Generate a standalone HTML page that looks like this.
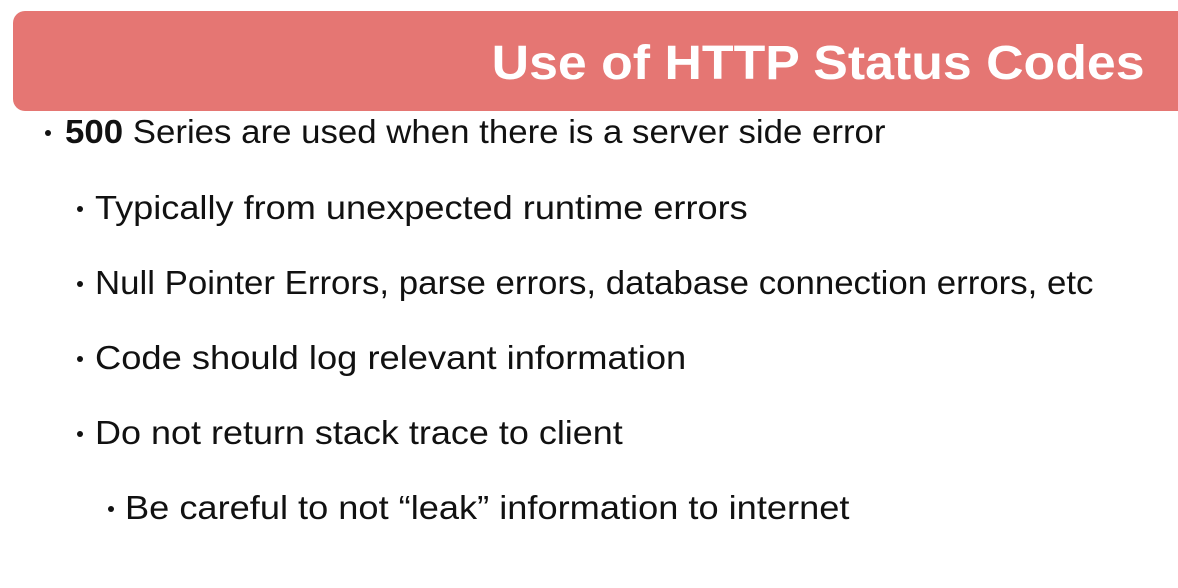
<!DOCTYPE html>
<html><head><style>
body{margin:0;width:1178px;height:588px;background:#fff;overflow:hidden;position:relative;font-family:"Liberation Sans",sans-serif;}
.bar{position:absolute;left:13px;top:11px;width:1190px;height:100px;background:#e57673;border-radius:12px;}
.title{position:absolute;right:33px;top:36px;color:#fff;font-weight:bold;font-size:48px;line-height:56px;white-space:nowrap;transform-origin:right center;transform:scaleX(1.08);}
.l{position:absolute;font-size:33px;line-height:36px;color:#111;white-space:nowrap;transform-origin:left center;transform:scaleX(1.055);}
.b{position:absolute;width:6px;height:6px;border-radius:50%;background:#111;}
</style></head><body>
<div class="bar"></div>
<div class="title">Use of HTTP Status Codes</div>
<div class="b" style="left:45px;top:130px"></div>
<div class="l" style="left:65px;top:114px"><b>500</b> Series are used when there is a server side error</div>
<div class="b" style="left:77px;top:206px"></div>
<div class="l" style="left:95px;top:190px;transform:scaleX(1.095)">Typically from unexpected runtime errors</div>
<div class="b" style="left:77px;top:281px"></div>
<div class="l" style="left:95px;top:265px">Null Pointer Errors, parse errors, database connection errors, etc</div>
<div class="b" style="left:77px;top:356px"></div>
<div class="l" style="left:95px;top:340px;transform:scaleX(1.1)">Code should log relevant information</div>
<div class="b" style="left:77px;top:431px"></div>
<div class="l" style="left:95px;top:415px;transform:scaleX(1.09)">Do not return stack trace to client</div>
<div class="b" style="left:108px;top:506px"></div>
<div class="l" style="left:125px;top:490px;transform:scaleX(1.097)">Be careful to not “leak” information to internet</div>
</body></html>
